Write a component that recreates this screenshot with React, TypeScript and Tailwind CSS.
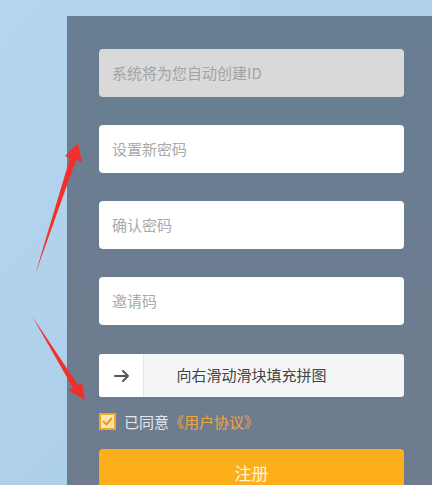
import { useState } from "react";

const fields = [
  { ph: "系统将为您自动创建ID", disabled: true },
  { ph: "设置新密码", disabled: false },
  { ph: "确认密码", disabled: false },
  { ph: "邀请码", disabled: false },
];

export default function App() {
  const [agreed, setAgreed] = useState(true);

  return (
    <div
      className="relative h-[485px] w-[432px] overflow-hidden bg-gradient-to-br from-[#b4d5ee] to-[#a9cce8] pt-[16px] pl-[67px]"
      style={{ fontFamily: '"Noto Sans CJK SC", "Noto Sans", sans-serif' }}
    >
      {/* register panel */}
      <div className="flex min-h-full w-full flex-col bg-gradient-to-b from-[#687e92] to-[#6f7b8e] pt-[33px] pb-[20px] pl-[32px] pr-[28px]">
        <div className="flex shrink-0 flex-col gap-[28px]">
          {fields.map((f) => (
            <div
              key={f.ph}
              className={`flex h-[48px] shrink-0 items-center rounded-[4px] px-[13px] text-[15px] ${
                f.disabled ? "bg-[#d9d9d9] text-[#a3a3a3]" : "bg-white text-[#a9a9a9]"
              }`}
            >
              {f.ph}
            </div>
          ))}
        </div>

        {/* slider captcha */}
        <div className="relative mt-[29px] flex h-[43px] shrink-0 items-center rounded-[3px] bg-[#f4f5f7]">
          <div className="flex h-full w-[45px] items-center justify-center rounded-l-[3px] border-r border-[#e4e6ea] bg-white">
            <svg width="17" height="14" viewBox="0 0 17 14" fill="none" stroke="#555" strokeWidth="2" strokeLinecap="round" strokeLinejoin="round">
              <path d="M2 7h13M10 2l5 5-5 5" />
            </svg>
          </div>
          <span className="absolute inset-0 flex items-center justify-center text-[15px] text-[#444]">
            向右滑动滑块填充拼图
          </span>
        </div>

        {/* agreement */}
        <div className="mt-[16px] flex h-[17px] shrink-0 items-center gap-[8px] text-[15px]">
          <button
            onClick={() => setAgreed(!agreed)}
            className="flex h-[17px] w-[17px] items-center justify-center border-2 border-[#f5a623] bg-[#fce6b4]"
          >
            {agreed && (
              <svg width="11" height="9" viewBox="0 0 11 9" fill="none" stroke="#f29b12" strokeWidth="2" strokeLinecap="round" strokeLinejoin="round">
                <path d="M1.5 4.5l3 3 5-6" />
              </svg>
            )}
          </button>
          <span className="leading-none text-[#e2e8ef]">
            已同意<span className="text-[#f0a540]">《用户协议》</span>
          </span>
        </div>

        <button className="mt-[19px] flex h-[48px] shrink-0 items-center justify-center rounded-[4px] bg-[#fdae1b] text-[17px] text-[#fff4dc]">
          注册
        </button>
      </div>

      {/* red annotation arrows */}
      <svg className="pointer-events-none absolute left-0 top-0" width="432" height="485">
        <polygon points="35,275 70,158 65,156 78,143 82,162 76,160" fill="#f2302b" />
        <polygon points="32,316 78,385 82,383 85,400 68,390 73,388" fill="#f2302b" />
      </svg>
    </div>
  );
}
